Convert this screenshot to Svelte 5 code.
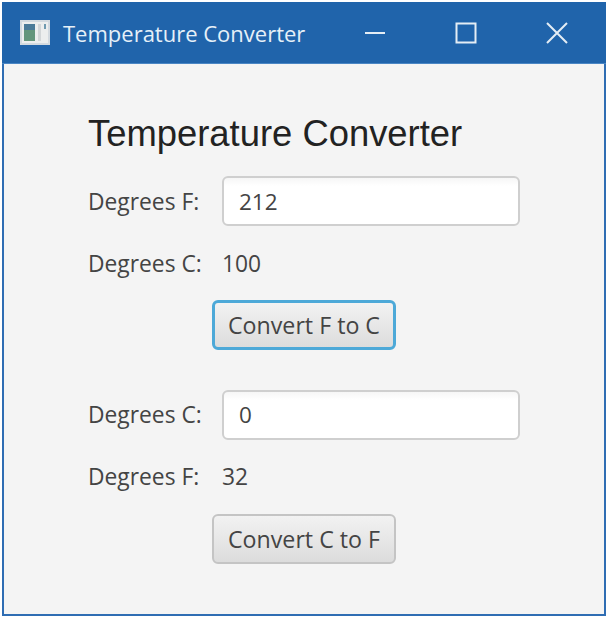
<script>
	let degreesF = $state('212');
	let resultC = $state('100');
	let degreesC = $state('0');
	let resultF = $state('32');

	const toC = () => {
		resultC = String(Math.round(((Number(degreesF) - 32) * 5) / 9));
	};
	const toF = () => {
		resultF = String(Math.round((Number(degreesC) * 9) / 5 + 32));
	};
</script>

<div class="window">
	<header class="titlebar">
		<svg class="app-icon" width="30" height="25" viewBox="0 0 30 25">
			<rect x="0" y="0" width="30" height="25" fill="#d3dae0" />
			<rect x="2" y="2" width="26" height="21" fill="#eceeee" />
			<rect x="4" y="4" width="11" height="17" fill="#63967c" />
			<rect x="4" y="4" width="11" height="6" fill="#4a7a98" />
			<rect x="18" y="4" width="3" height="17" fill="#d2d6d8" />
			<rect x="24" y="4" width="2" height="5" fill="#6f9ab0" />
		</svg>
		<span class="title">Temperature Converter</span>
		<div class="controls">
			<svg width="22" height="22" viewBox="0 0 22 22"><path d="M1 11H21" /></svg>
			<svg width="22" height="22" viewBox="0 0 22 22"><rect x="1.5" y="1.5" width="19" height="19" /></svg>
			<svg width="22" height="22" viewBox="0 0 22 22"><path d="M1 1L21 21M21 1L1 21" /></svg>
		</div>
	</header>

	<main class="content">
		<h1>Temperature Converter</h1>
		<div class="form">
			<label for="deg-f">Degrees F:</label>
			<input id="deg-f" bind:value={degreesF} />
			<span class="label">Degrees C:</span>
			<span class="label">{resultC}</span>
			<button class="focused" onclick={toC}>Convert F to C</button>

			<label class="second" for="deg-c">Degrees C:</label>
			<input class="second" id="deg-c" bind:value={degreesC} />
			<span class="label">Degrees F:</span>
			<span class="label">{resultF}</span>
			<button onclick={toF}>Convert C to F</button>
		</div>
	</main>
</div>

<style>
	:global(body) {
		background: #fff;
	}

	.window {
		box-sizing: border-box;
		width: 604px;
		height: 614px;
		margin: 2px;
		display: flex;
		flex-direction: column;
		border: 2px solid #2f6db3;
		border-top: 0;
		background: #f4f4f4;
		font-family: "Open Sans", "Noto Sans", sans-serif;
	}

	.titlebar {
		box-sizing: border-box;
		height: 62px;
		margin: 0 -2px;
		padding: 0 38px 0 18px;
		display: flex;
		align-items: center;
		flex-shrink: 0;
		background: #2064ab;
		color: #e6f0f8;
		border-bottom: 1px solid #4a86c4;
	}

	.app-icon {
		flex-shrink: 0;
	}

	.title {
		margin-left: 13px;
		font-size: 22px;
		white-space: nowrap;
	}

	.controls {
		margin-left: auto;
		display: flex;
		gap: 69px;
	}

	.controls svg {
		fill: none;
		stroke: #e4edf5;
		stroke-width: 2;
	}

	.content {
		padding: 50px 86px 0 84px;
	}

	h1 {
		margin: 0 0 22px;
		font-family: "Liberation Sans", Arial, sans-serif;
		font-size: 36.4px;
		font-weight: 400;
		line-height: 40px;
		color: #222;
	}

	.form {
		display: grid;
		grid-template-columns: 134px 298px;
		row-gap: 24.5px;
		align-items: center;
	}

	label,
	.label {
		font-size: 22.8px;
		line-height: 25px;
		color: #444;
	}

	input {
		box-sizing: border-box;
		width: 100%;
		height: 50px;
		padding: 0 15px;
		border: 2px solid #cfcfcf;
		border-radius: 6px;
		background: linear-gradient(#f6f6f6, #fff 8px);
		font: inherit;
		font-size: 22.5px;
		color: #444;
		outline: none;
	}

	button {
		grid-column: 1 / -1;
		justify-self: center;
		box-sizing: border-box;
		width: 184px;
		height: 50px;
		padding: 0;
		border: 2px solid #c4c4c4;
		border-radius: 6px;
		background: linear-gradient(#f2f2f2, #dcdcdc);
		font: inherit;
		font-size: 23.2px;
		color: #444;
	}

	button.focused {
		border: 3px solid #4da9d8;
	}

	.second {
		margin-top: 15px;
	}
</style>
